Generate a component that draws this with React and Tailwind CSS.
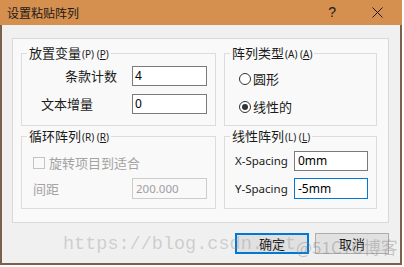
import React from 'react';

const cjk = { fontFamily: '"Noto Sans CJK SC", "Noto Sans", sans-serif' };

const GroupBox = ({ title, hotkey, children, className = '' }) => (
  <div className={`relative border border-[#dcdcdc] h-[73px] ${className}`}>
    <span className="absolute left-[5px] top-[-10px] bg-[#f9f9f9] px-[2px] text-[13px] leading-[18px] text-[#1a1a1a] whitespace-nowrap">
      {title}
      <span className="text-[10px] ml-[1px]" style={{ fontFamily: '"Noto Sans", sans-serif' }}>
        ({hotkey}) (<span className="underline">{hotkey}</span>)
      </span>
    </span>
    {children}
  </div>
);

const Radio = ({ checked, label }) => (
  <div className="flex items-center h-[20px] pl-[14px]">
    <span className="w-[12px] h-[12px] rounded-full border border-[#333] bg-white flex items-center justify-center">
      {checked && <span className="w-[6px] h-[6px] rounded-full bg-[#333]" />}
    </span>
    <span className="ml-[2px] text-[13px] text-[#1a1a1a]">{label}</span>
  </div>
);

export default function App() {
  return (
    <div className="w-[404px] h-[267px] bg-white" style={cjk}>
      <div className="relative w-[402px] h-[265px] flex flex-col">
        {/* title bar */}
        <div className="h-[25px] bg-[#d58f4e] flex items-center shrink-0">
          <span className="ml-[7px] text-[12px] text-[#1a1a1a]">设置粘贴阵列</span>
          <span className="ml-auto mr-[36px] text-[14px] text-[#1a1a1a]" style={{ fontFamily: '"Liberation Sans", sans-serif' }}>?</span>
          <svg width="11" height="11" viewBox="0 0 11 11" className="mr-[19px]">
            <path d="M0.5 0.5 L10.5 10.5 M10.5 0.5 L0.5 10.5" stroke="#1a1a1a" strokeWidth="1" />
          </svg>
        </div>

        <div className="flex-1 bg-[#f0f0f0] border-x-2 border-b-2 border-[#7b6149] flex flex-col">
          {/* panel */}
          <div className="ml-[10px] mt-[13px] w-[377px] h-[185px] border border-[#d9d9d9] bg-[#f9f9f9] pt-[14px] pl-[8px]">
            <div className="grid grid-cols-[195px_153px] gap-x-[8px] gap-y-[10px]">
              <GroupBox title="放置变量" hotkey="P">
                <div className="flex flex-col gap-[8px] pt-[12px]">
                  <div className="flex items-center h-[20px]">
                    <span className="ml-[43px] text-[13px] text-[#1a1a1a]">条款计数</span>
                    <div className="ml-auto mr-[8px] w-[75px] h-[20px] border border-[#7a7a7a] bg-white pl-[2px] text-[12px] leading-[18px] text-black" style={{ fontFamily: '"Noto Sans", sans-serif' }}>4</div>
                  </div>
                  <div className="flex items-center h-[20px]">
                    <span className="ml-[19px] text-[13px] text-[#1a1a1a]">文本增量</span>
                    <div className="ml-auto mr-[8px] w-[75px] h-[20px] border border-[#7a7a7a] bg-white pl-[2px] text-[12px] leading-[18px] text-black" style={{ fontFamily: '"Noto Sans", sans-serif' }}>0</div>
                  </div>
                </div>
              </GroupBox>

              <GroupBox title="阵列类型" hotkey="A">
                <div className="flex flex-col gap-[8px] pt-[15px]">
                  <Radio label="圆形" />
                  <Radio checked label="线性的" />
                </div>
              </GroupBox>

              <GroupBox title="循环阵列" hotkey="R">
                <div className="flex flex-col gap-[5px] pt-[16px]">
                  <div className="flex items-center h-[20px] pl-[11px]">
                    <span className="w-[12px] h-[12px] border border-[#c4c4c4] bg-[#f9f9f9]" />
                    <span className="ml-[4px] text-[13px] text-[#a3a3a3]">旋转项目到适合</span>
                  </div>
                  <div className="flex items-center h-[21px]">
                    <span className="ml-[11px] text-[13px] text-[#a3a3a3]">间距</span>
                    <div className="ml-auto mr-[8px] w-[75px] h-[21px] border border-[#cccccc] pl-[3px] text-[11.5px] leading-[19px] text-[#a0a0a0]" style={{ fontFamily: '"Noto Sans", sans-serif' }}>200.000</div>
                  </div>
                </div>
              </GroupBox>

              <GroupBox title="线性阵列" hotkey="L">
                <div className="flex flex-col gap-[7px] pt-[14px]" style={{ fontFamily: '"Noto Sans", sans-serif' }}>
                  <div className="flex items-center h-[20px]">
                    <span className="ml-[10px] text-[11.5px] text-[#1a1a1a]">X-Spacing</span>
                    <div className="ml-auto mr-[8px] w-[74px] h-[20px] border border-[#7a7a7a] bg-white pl-[3px] text-[12px] leading-[18px] text-black">0mm</div>
                  </div>
                  <div className="flex items-center h-[21px]">
                    <span className="ml-[10px] text-[11.5px] text-[#1a1a1a]">Y-Spacing</span>
                    <div className="ml-auto mr-[8px] w-[74px] h-[21px] border border-[#0078d7] bg-white pl-[3px] text-[12px] leading-[19px] text-black">-5mm</div>
                  </div>
                </div>
              </GroupBox>
            </div>
          </div>

          {/* buttons */}
          <div className="flex justify-end gap-[6px] mt-[10px] mr-[11px]">
            <button className="w-[74px] h-[21px] border-2 border-[#0078d7] bg-[#e1e1e1] text-[13px] leading-[17px] text-[#1a1a1a]">确定</button>
            <button className="w-[74px] h-[21px] border border-[#adadad] bg-[#e1e1e1] text-[13px] leading-[19px] text-[#1a1a1a]">取消</button>
          </div>
        </div>

        {/* watermark */}
        <span className="absolute left-[63px] top-[234px] text-[18.5px] leading-[22px] text-[rgba(140,140,140,0.35)] pointer-events-none whitespace-nowrap" style={{ fontFamily: '"Liberation Mono", monospace' }}>
          https://blog.csdn.net
        </span>
        <span className="absolute left-[296px] top-[236px] text-[17px] leading-[22px] text-[rgba(140,140,140,0.45)] pointer-events-none whitespace-nowrap" style={cjk}>
          @51CTO博客
        </span>
      </div>
    </div>
  );
}
